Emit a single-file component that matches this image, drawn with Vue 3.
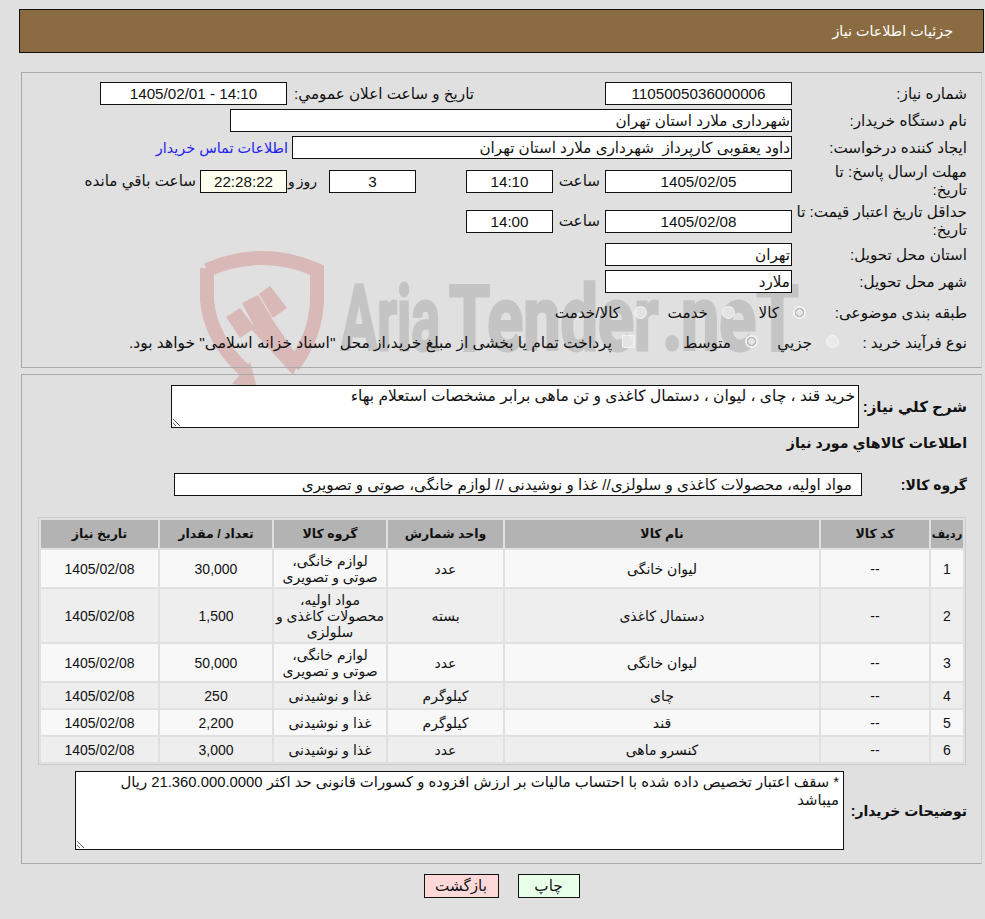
<script setup>
const rows = [
  { id: 1, code: '--', name: 'لیوان خانگی', unit: 'عدد', group: 'لوازم خانگی، صوتی و تصویری', qty: '30,000', date: '1405/02/08' },
  { id: 2, code: '--', name: 'دستمال کاغذی', unit: 'بسته', group: 'مواد اولیه، محصولات کاغذی و سلولزی', qty: '1,500', date: '1405/02/08' },
  { id: 3, code: '--', name: 'لیوان خانگی', unit: 'عدد', group: 'لوازم خانگی، صوتی و تصویری', qty: '50,000', date: '1405/02/08' },
  { id: 4, code: '--', name: 'چای', unit: 'کیلوگرم', group: 'غذا و نوشیدنی', qty: '250', date: '1405/02/08' },
  { id: 5, code: '--', name: 'قند', unit: 'کیلوگرم', group: 'غذا و نوشیدنی', qty: '2,200', date: '1405/02/08' },
  { id: 6, code: '--', name: 'کنسرو ماهی', unit: 'عدد', group: 'غذا و نوشیدنی', qty: '3,000', date: '1405/02/08' }
]
</script>

<template>
  <div class="page" dir="rtl">
    <!-- watermark -->
    <svg class="watermark" width="985" height="400" viewBox="0 0 985 400" aria-hidden="true">
      <g fill="none" stroke="#d9b8b8" stroke-width="14">
        <path d="M207 270 Q262 246 317 270 L317 300 Q316 335 293 366" />
        <path d="M207 268 L207 300 Q210 338 244 370" />
      </g>
      <g fill="#d9b8b8">
        <polygon points="250,362 257,388 232,384" />
        <polygon points="226,317 240,308 255,328 240,338" />
        <polygon points="242,303 258,295 272,318 255,328" />
        <polygon points="259,294 270,286 287,308 273,318" />
        <polygon points="250,328 270,316 300,360 293,375" />
      </g>
      <text class="wm-text" transform="translate(341 349.5) scale(0.6 1)">Aria</text>
      <text class="wm-text" transform="translate(449 349.5) scale(0.74 1)">Tender</text>
      <text class="wm-text" transform="translate(662 349.5) scale(0.8 1)">.</text>
      <text class="wm-text" transform="translate(681 349.5) scale(0.76 1)">neT</text>
    </svg>

    <div class="title-bar">جزئیات اطلاعات نیاز</div>

    <div class="panel panel-top">
      <div class="row">
        <label class="lbl">شماره نیاز:</label>
        <div class="field w187">1105005036000006</div>
        <span class="inline-lbl announce">تاریخ و ساعت اعلان عمومي:</span>
        <div class="field w187 announce-val">14:10 - 1405/02/01</div>
      </div>
      <div class="row">
        <label class="lbl">نام دستگاه خریدار:</label>
        <div class="field start w562">شهرداری ملارد استان تهران</div>
      </div>
      <div class="row">
        <label class="lbl">ایجاد کننده درخواست:</label>
        <div class="field start w500">داود یعقوبی کارپرداز&nbsp; شهرداری ملارد استان تهران</div>
        <a class="contact" href="#">اطلاعات تماس خریدار</a>
      </div>
      <div class="row tall">
        <label class="lbl">مهلت ارسال پاسخ: تا<br />تاریخ:</label>
        <div class="field w187">1405/02/05</div>
        <span class="hour">ساعت</span>
        <div class="field w87">14:10</div>
        <div class="field w87 days">3</div>
        <span class="day-lbl">روز و</span>
        <div class="field w87 remain">22:28:22</div>
        <span class="remain-lbl">ساعت باقي مانده</span>
      </div>
      <div class="row tall">
        <label class="lbl">حداقل تاریخ اعتبار قیمت: تا<br />تاریخ:</label>
        <div class="field w187">1405/02/08</div>
        <span class="hour">ساعت</span>
        <div class="field w87">14:00</div>
      </div>
      <div class="row">
        <label class="lbl">استان محل تحویل:</label>
        <div class="field start w187">تهران</div>
      </div>
      <div class="row">
        <label class="lbl">شهر محل تحویل:</label>
        <div class="field start w187">ملارد</div>
      </div>
      <div class="row radios-a">
        <label class="lbl short">طبقه بندی موضوعی:</label>
        <div class="opt w71"><input type="radio" name="cat" checked disabled /><span>کالا</span></div>
        <div class="opt w88"><input type="radio" name="cat" disabled /><span>خدمت</span></div>
        <div class="opt"><input type="radio" name="cat" disabled /><span>کالا/خدمت</span></div>
      </div>
      <div class="row radios-b">
        <label class="lbl shorter">نوع فرآیند خرید :</label>
        <div class="opt w81"><input type="radio" name="proc" disabled /><span>جزيي</span></div>
        <div class="opt w123"><input type="radio" name="proc" checked disabled /><span>متوسط</span></div>
        <div class="opt"><input type="checkbox" disabled /><span class="pay">پرداخت تمام یا بخشی از مبلغ خرید،از محل "اسناد خزانه اسلامی" خواهد بود.</span></div>
      </div>
    </div>

    <div class="panel panel-bottom">
      <div class="desc-row">
        <label class="lbl-b w108">شرح کلي نیاز:</label>
        <textarea class="area area-a" readonly>خرید قند ، چای ، لیوان ، دستمال کاغذی و تن ماهی برابر مشخصات استعلام بهاء</textarea>
      </div>
      <h3 class="section">اطلاعات کالاهاي مورد نیاز</h3>
      <div class="group-row">
        <label class="lbl-b small w105">گروه کالا:</label>
        <div class="field group-val">مواد اولیه، محصولات کاغذی و سلولزی// غذا و نوشیدنی // لوازم خانگی، صوتی و تصویری</div>
      </div>

      <table class="items">
        <colgroup>
          <col style="width:32px" />
          <col style="width:108px" />
          <col style="width:314px" />
          <col style="width:115px" />
          <col style="width:112px" />
          <col style="width:112px" />
          <col />
        </colgroup>
        <thead>
          <tr>
            <th class="narrow">ردیف</th>
            <th>کد کالا</th>
            <th>نام کالا</th>
            <th>واحد شمارش</th>
            <th>گروه کالا</th>
            <th>تعداد / مقدار</th>
            <th>تاریخ نیاز</th>
          </tr>
        </thead>
        <tbody>
          <tr v-for="row in rows" :key="row.id">
            <td>{{ row.id }}</td>
            <td>{{ row.code }}</td>
            <td>{{ row.name }}</td>
            <td>{{ row.unit }}</td>
            <td>{{ row.group }}</td>
            <td>{{ row.qty }}</td>
            <td>{{ row.date }}</td>
          </tr>
        </tbody>
      </table>

      <div class="note-row">
        <label class="lbl-b small w123">توضیحات خریدار:</label>
        <textarea class="area area-b" readonly>* سقف اعتبار تخصیص داده شده با احتساب مالیات بر ارزش افزوده و کسورات قانونی حد اکثر 21.360.000.0000 ریال میباشد</textarea>
      </div>
    </div>

    <div class="actions">
      <button class="btn print" type="button">چاپ</button>
      <button class="btn back" type="button">بازگشت</button>
    </div>
  </div>
</template>

<style>
html,
body {
  margin: 0;
  background: #e0e0e0;
}
</style>

<style scoped>
.page {
  position: relative;
  width: 985px;
  height: 919px;
  box-sizing: border-box;
  padding: 9px 1px 0 19px;
  background: #e0e0e0;
  color: #111;
  font-family: "Liberation Sans", "DejaVu Sans", sans-serif;
  font-size: 15.2px;
  line-height: 18px;
  overflow: hidden;
}

.watermark {
  position: absolute;
  top: 0;
  left: 0;
}

.wm-text {
  direction: ltr;
  font-family: Roboto, "Liberation Sans", sans-serif;
  font-size: 90px;
  font-weight: 700;
  fill: #c4c4c4;
  stroke: #c4c4c4;
  stroke-width: 3px;
}

.title-bar {
  position: relative;
  height: 44px;
  box-sizing: border-box;
  padding-right: 30px;
  border: 1px solid #111;
  background: #8b6c42;
  color: #fff;
  font-size: 14.3px;
  line-height: 42px;
}

.panel {
  position: relative;
  margin-left: 2px;
  margin-right: 2px;
  box-sizing: border-box;
  border: 1px solid #aaa;
  border-right-color: #ccc;
  border-bottom-color: #aaa;
}

.panel-top {
  height: 296px;
  margin-top: 19px;
  padding: 7px 14px 0 0;
}

.panel-bottom {
  height: 490px;
  margin-top: 6px;
  padding: 10px 14px 0 0;
}

.row {
  display: flex;
  align-items: center;
  height: 27px;
}

.row.tall {
  height: 40px;
}

.radios-a {
  height: 30px;
  padding-top: 3px;
}

.radios-b {
  height: 29px;
}

.lbl {
  flex: none;
  width: 175px;
  box-sizing: border-box;
  white-space: nowrap;
}

.lbl.short {
  width: 161px;
}

.lbl.shorter {
  width: 128px;
}

.field {
  flex: none;
  height: 23px;
  box-sizing: border-box;
  border: 1px solid #111;
  background: #fff;
  text-align: center;
  line-height: 21px;
  white-space: nowrap;
  overflow: hidden;
}

.field.start {
  padding-right: 1px;
  text-align: right;
}

.w187 {
  width: 187px;
}

.w87 {
  width: 87px;
}

.w562 {
  width: 562px;
}

.w500 {
  width: 500px;
}

.announce {
  margin-right: 131px;
  width: 182px;
  flex: none;
  white-space: nowrap;
}

.announce-val {
  margin-right: 5px;
}

.contact {
  margin-right: 4px;
  color: #2222ee;
  font-size: 14.4px;
  text-decoration: none;
  white-space: nowrap;
}

.hour {
  flex: none;
  width: 52px;
  box-sizing: border-box;
  padding-right: 5px;
}

.days {
  margin-right: 50px;
}

.day-lbl {
  flex: none;
  width: 42px;
  box-sizing: border-box;
  padding-right: 12px;
  font-size: 14px;
  word-spacing: -2px;
  white-space: nowrap;
}

.remain {
  background: #fffff0;
}

.remain-lbl {
  margin-right: 4px;
  white-space: nowrap;
}

.opt {
  flex: none;
  display: flex;
  align-items: center;
  white-space: nowrap;
}

.opt span {
  margin-right: 14px;
}

.opt .pay {
  margin-right: 10px;
  font-size: 15.5px;
}

.w71 {
  width: 71px;
}

.w88 {
  width: 88px;
}

.w81 {
  width: 81px;
}

.w123 {
  width: 123px;
}

input[type="radio"],
input[type="checkbox"] {
  flex: none;
  width: 13px;
  height: 13px;
  margin: 0 0 2px;
  box-sizing: border-box;
  appearance: none;
  border: 1px solid rgba(245, 245, 245, 0.85);
  background: rgba(238, 238, 238, 0.75);
}

input[type="radio"] {
  border-radius: 50%;
}

input[type="radio"]:checked {
  background: radial-gradient(circle, #e6e6e6 0 3px, #b9b9b9 3.5px 4.5px, #f0f0f0 5px);
}

input[type="checkbox"] {
  border-radius: 2px;
}

.desc-row,
.group-row,
.note-row {
  display: flex;
  align-items: center;
}

.lbl-b {
  flex: none;
  box-sizing: border-box;
  font-weight: 700;
  font-size: 15px;
  white-space: nowrap;
}

.lbl-b.small {
  font-size: 14px;
}

.w108 {
  width: 108px;
}

.w105 {
  width: 105px;
}

.area {
  flex: none;
  box-sizing: border-box;
  border: 1px solid #111;
  border-radius: 0;
  margin: 0;
  padding: 1px 3px;
  background: #fff;
  color: #111;
  font: inherit;
  outline: none;
}

.area-a {
  width: 688px;
  height: 43px;
  font-size: 15.5px;
}

.area-b {
  width: 769px;
  height: 79px;
  padding: 1px 4px 1px 14px;
  font-size: 14.85px;
}

.section {
  margin: 6px 0 0;
  height: 18px;
  line-height: 18px;
  font-size: 14.2px;
  font-weight: 700;
}

.group-row {
  margin-top: 21px;
}

.group-val {
  width: 688px;
  padding-right: 9px;
  text-align: right;
}

.items {
  width: 928px;
  margin: 21px 1px 0 0;
  border: 1px solid #ccc;
  border-spacing: 2px;
  border-collapse: separate;
  table-layout: fixed;
  font-size: 14px;
  text-align: center;
  line-height: 16px;
}

.items th {
  height: 28px;
  padding: 0;
  background: #b3b3b3;
  font-weight: 700;
  font-size: 12.5px;
}

.items th.narrow {
  font-size: 11.5px;
}

.items td {
  height: 25px;
  box-sizing: border-box;
  padding: 2.5px 0;
}

.items tbody tr:nth-child(odd) td {
  background: #f8f8f8;
}

.items tbody tr:nth-child(even) td {
  background: #eee;
}

.note-row {
  margin-top: 6px;
}

.actions {
  position: relative;
  display: flex;
  justify-content: center;
  gap: 19px;
  margin-top: 10px;
}

.btn {
  height: 24px;
  padding: 0;
  border: 1px solid #111;
  font: inherit;
  color: #111;
}

.print {
  width: 62px;
  background: #e8ffe8;
}

.back {
  width: 75px;
  background: #ffd9d9;
}
</style>
